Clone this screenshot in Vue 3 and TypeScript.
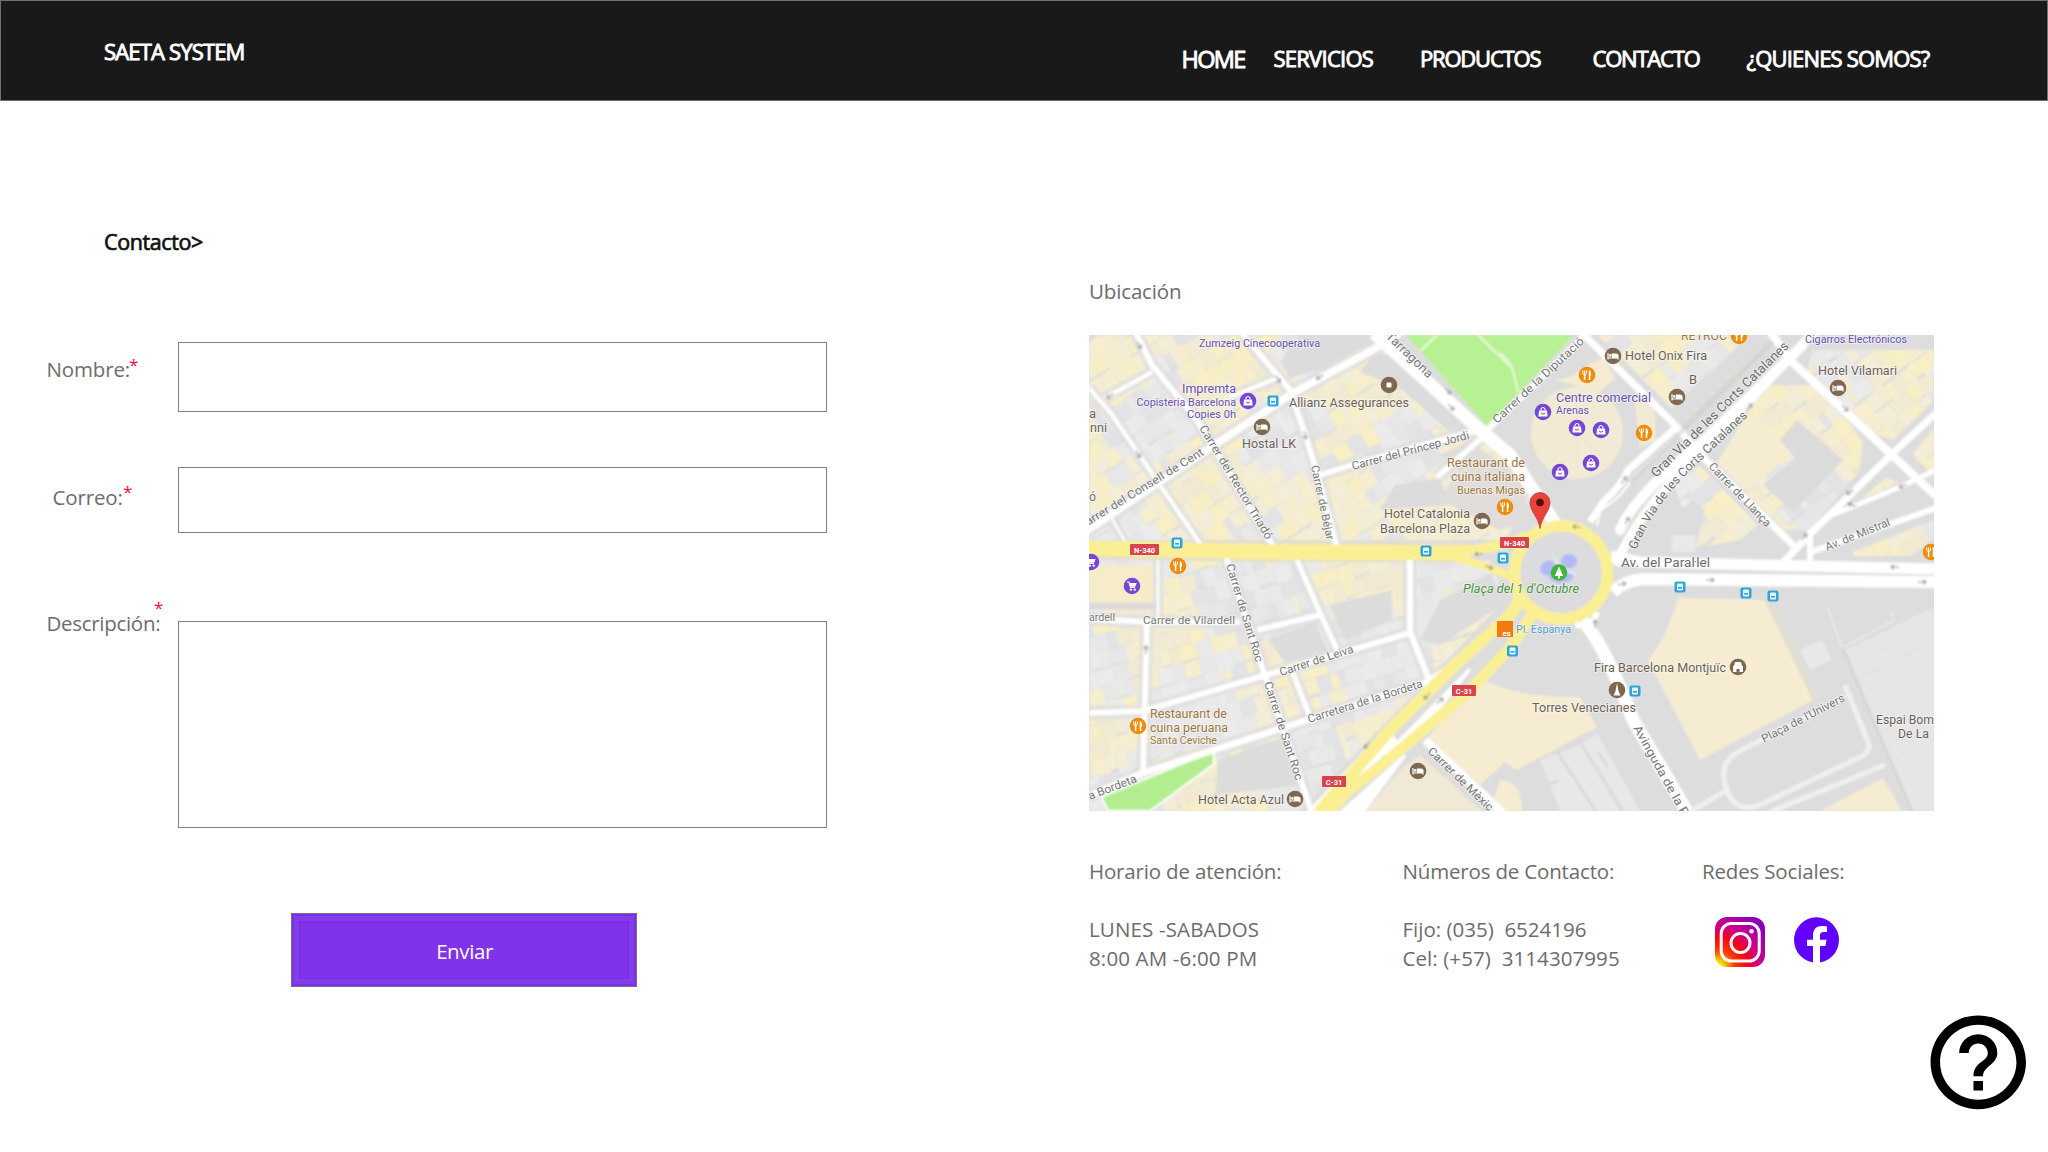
<script setup lang="ts">
interface NavItem { text: string; cls: string }
interface Field { id: string; label: string; area: boolean }
interface Label { t: string; x: number; y: number; len: number; s: number; c: string; r?: number; i?: boolean }
interface Poi { x: number; y: number }
interface Lot { x: number; y: number; w: number; h: number; fill: string }

const nav: NavItem[] = [
  { text: 'HOME', cls: 'home' },
  { text: 'SERVICIOS', cls: 'servicios' },
  { text: 'PRODUCTOS', cls: 'productos' },
  { text: 'CONTACTO', cls: 'contacto' },
  { text: '¿QUIENES SOMOS?', cls: 'quienes' },
]

const fields: Field[] = [
  { id: 'nombre', label: 'Nombre:', area: false },
  { id: 'correo', label: 'Correo:', area: false },
  { id: 'descripcion', label: 'Descripción:', area: true },
]

const BROWN = '#6d5f56'
const STREET = '#777777'
const PURPLE = '#6550b0'
const FOOD = '#a0753c'

const labels: Label[] = [
  { t: 'Zumzeig Cinecooperativa', x: 1199, y: 347, len: 121, s: 10.5, c: PURPLE },
  { t: 'Impremta', x: 1182, y: 392.5, len: 54, s: 12, c: PURPLE },
  { t: 'Copisteria Barcelona', x: 1136.5, y: 405.5, len: 99.5, s: 10.5, c: PURPLE },
  { t: 'Copies 0h', x: 1187, y: 418, len: 49, s: 10.5, c: PURPLE },
  { t: 'Allianz Assegurances', x: 1289, y: 407, len: 120, s: 12, c: BROWN },
  { t: 'Hostal LK', x: 1242, y: 448, len: 54, s: 12, c: BROWN },
  { t: 'a', x: 1089, y: 418, len: 7, s: 12, c: BROWN },
  { t: 'nni', x: 1090, y: 432, len: 17, s: 12, c: BROWN },
  { t: 'ó', x: 1089, y: 501, len: 7, s: 12, c: STREET },
  { t: 'Carrer del Rector Triadó', x: 1199, y: 428, len: 131, s: 11.5, c: STREET, r: 59 },
  { t: 'Carrer del Consell de Cent', x: 1081, y: 530, len: 145, s: 11.5, c: STREET, r: -31.5 },
  { t: 'Carrer de Béjar', x: 1311, y: 466, len: 76, s: 11, c: STREET, r: 78 },
  { t: 'Carrer del Príncep Jordi', x: 1353, y: 470, len: 121, s: 11.5, c: STREET, r: -15 },
  { t: 'Tarragona', x: 1385, y: 337, len: 60, s: 12.5, c: STREET, r: 44 },
  { t: 'Carrer de la Diputació', x: 1497, y: 424, len: 120, s: 11.5, c: STREET, r: -43 },
  { t: 'Hotel Onix Fira', x: 1625, y: 360, len: 82, s: 12, c: BROWN },
  { t: 'B', x: 1689, y: 384, len: 8, s: 12, c: BROWN },
  { t: 'RETROC', x: 1681, y: 340, len: 46, s: 12, c: FOOD },
  { t: 'Cigarros Electrónicos', x: 1805, y: 343, len: 102, s: 10.5, c: PURPLE },
  { t: 'Hotel Vilamari', x: 1818, y: 375, len: 79, s: 12, c: BROWN },
  { t: 'Centre comercial', x: 1556, y: 401.5, len: 95, s: 12.5, c: PURPLE },
  { t: 'Arenas', x: 1556, y: 414, len: 33, s: 10.5, c: PURPLE },
  { t: 'Gran Via de les Corts Catalanes', x: 1656, y: 478, len: 187, s: 13, c: '#6a6a6a', r: -44.5 },
  { t: 'Carrer de Llança', x: 1708, y: 467, len: 84, s: 11.5, c: STREET, r: 46 },
  { t: 'Av. del Paraŀlel', x: 1621, y: 567, len: 89, s: 12.5, c: '#6a6a6a' },
  { t: 'Av. de Mistral', x: 1827, y: 551, len: 69, s: 11.5, c: STREET, r: -22 },
  { t: 'Restaurant de', x: 1447, y: 466.5, len: 78, s: 12, c: FOOD },
  { t: 'cuina italiana', x: 1451, y: 481, len: 74, s: 12, c: FOOD },
  { t: 'Buenas Migas', x: 1457, y: 494, len: 68, s: 10.5, c: FOOD },
  { t: 'Hotel Catalonia', x: 1384, y: 518, len: 86, s: 12, c: BROWN },
  { t: 'Barcelona Plaza', x: 1380, y: 533, len: 90, s: 12, c: BROWN },
  { t: "Plaça del 1 d'Octubre", x: 1463, y: 593, len: 116, s: 12, c: '#459440', i: true },
  { t: 'Pl. Espanya', x: 1516, y: 633, len: 55, s: 11, c: '#559bd3' },
  { t: 'Fira Barcelona Montjuïc', x: 1594, y: 672, len: 132, s: 12, c: BROWN },
  { t: 'Torres Venecianes', x: 1532, y: 712, len: 104, s: 12, c: BROWN },
  { t: 'Avinguda de la P', x: 1633, y: 728, len: 102, s: 12, c: STREET, r: 61 },
  { t: "Plaça de l'Univers", x: 1764, y: 743, len: 92, s: 11.5, c: STREET, r: -27.5 },
  { t: 'Espai Bom', x: 1876, y: 724, len: 58, s: 12, c: BROWN },
  { t: 'De La', x: 1898, y: 738, len: 31, s: 12, c: BROWN },
  { t: 'ardell', x: 1089, y: 621, len: 26, s: 11.5, c: STREET },
  { t: 'Carrer de Vilardell', x: 1143, y: 624, len: 92, s: 11.5, c: STREET },
  { t: 'Carrer de Sant Roc', x: 1226, y: 565, len: 102, s: 11.5, c: STREET, r: 73 },
  { t: 'Carrer de Sant Roc', x: 1264, y: 683, len: 103, s: 11.5, c: STREET, r: 72 },
  { t: 'Carrer de Leiva', x: 1281, y: 676, len: 77, s: 11.5, c: STREET, r: -18 },
  { t: 'Carretera de la Bordeta', x: 1309, y: 723, len: 120, s: 11.5, c: STREET, r: -17.5 },
  { t: 'a Bordeta', x: 1090, y: 800, len: 51, s: 11.5, c: STREET, r: -21 },
  { t: 'Restaurant de', x: 1150, y: 717.5, len: 77, s: 12, c: FOOD },
  { t: 'cuina peruana', x: 1150, y: 731.5, len: 78, s: 12, c: FOOD },
  { t: 'Santa Ceviche', x: 1150, y: 744, len: 67, s: 10.5, c: FOOD },
  { t: 'Hotel Acta Azul', x: 1198, y: 803.5, len: 86, s: 12, c: BROWN },
  { t: 'Carrer de Mèxic', x: 1427, y: 752, len: 86, s: 11.5, c: STREET, r: 44 },
]

const p = (x: number, y: number): Poi => ({ x, y })
const beds = [p(1262, 427), p(1613, 356), p(1677, 397), p(1838, 388), p(1482, 521), p(1418, 771), p(1295, 799)]
const bags = [p(1248, 401), p(1543, 412), p(1577, 428), p(1601, 430), p(1591, 463), p(1560, 472)]
const carts = [p(1091, 562), p(1132, 586)]
const foods = [p(1587, 375), p(1644, 433), p(1739, 336), p(1505, 507), p(1178, 566), p(1138, 726), p(1931, 552)]
const buses = [p(1273, 401), p(1177, 543), p(1426, 551), p(1503, 558), p(1680, 587), p(1746, 593), p(1773, 596), p(1512.5, 651), p(1635, 691)]
const shields = [
  { x: 1130, y: 544, w: 29, t: 'N-340' },
  { x: 1500, y: 537, w: 29, t: 'N-340' },
  { x: 1452, y: 685, w: 24, t: 'C-31' },
  { x: 1322, y: 776, w: 24, t: 'C-31' },
]
const arrows = [
  { x: 1139, y: 345, r: 55 }, { x: 1110, y: 396, r: 145 }, { x: 1138, y: 454, r: 55 }, { x: 1278, y: 379, r: 50 },
  { x: 1320, y: 377, r: 150 }, { x: 1305, y: 435, r: 75 }, { x: 1448, y: 391, r: 45 }, { x: 1451, y: 407, r: 45 },
  { x: 1479, y: 554, r: 180 }, { x: 1489, y: 567, r: 20 }, { x: 1577, y: 527, r: 190 }, { x: 1627, y: 521, r: -60 },
  { x: 1624, y: 480, r: -50 }, { x: 1749, y: 407, r: -42 }, { x: 1845, y: 408, r: 45 }, { x: 1850, y: 492, r: 145 },
  { x: 1852, y: 505, r: 200 }, { x: 1903, y: 486, r: 158 }, { x: 1804, y: 537, r: -45 }, { x: 1895, y: 567, r: 180 },
  { x: 1710, y: 580, r: 0 }, { x: 1622, y: 584, r: -10 }, { x: 1922, y: 582, r: 0 }, { x: 1595, y: 624, r: -90 },
  { x: 1427, y: 696, r: 135 }, { x: 1440, y: 701, r: -42 }, { x: 1367, y: 745, r: 135 }, { x: 1146, y: 650, r: -90 },
]

// Side streets west of the square: each is drawn once as a grey kerb and once as a white carriageway.
const sideStreets: { d: string; w: number }[] = [
  { d: 'M1136 333L1152 365L1197 420L1273 546', w: 5.5 },
  { d: 'M1226 557L1263 670L1312 813', w: 5.5 },
  { d: 'M1242 333L1290 390L1307 440L1317 473L1337 548', w: 5.5 },
  { d: 'M1085 532L1207 450L1293 393L1387 342L1400 333', w: 7.5 },
  { d: 'M1152 372L1105 398M1230 397L1280 377', w: 4 },
  { d: 'M1320 475L1355 464L1478 430M1484 436L1437 477', w: 5.5 },
  { d: 'M1410 560V632L1430 682', w: 6 },
  { d: 'M1257 630L1320 615M1089 619L1147 622H1240M1147 622L1143 773M1089 713L1147 711', w: 5.5 },
  { d: 'M1147 710L1280 671L1413 632', w: 5.5 },
  { d: 'M1089 796L1143 773L1307 720L1427 682L1462 660', w: 6.5 },
  { d: 'M1297 560L1320 613L1338 652M1293 673L1310 717', w: 5 },
  { d: 'M1089 388L1110 412L1201 545', w: 4 },
  { d: 'M1107 510L1127 545M1158 560V620', w: 2.5 },
]

// Deterministic scatter of building lots, so that the map is drawn the same way every time.
function lots(seed: number, x0: number, y0: number, x1: number, y1: number, bias: number): Lot[] {
  let s = seed
  const rnd = (): number => {
    s = (s * 16807) % 2147483647
    return s / 2147483647
  }
  const warmFills = ['#f6eecf', '#f4edd7', '#f8efc6', '#f2ead2']
  const coolFills = ['#e7e7e9', '#e9e9e8', '#e3e3e6', '#ebebec']
  const out: Lot[] = []
  for (let y = y0; y < y1; y += 17) {
    for (let x = x0; x < x1;) {
      const w = 6 + rnd() * 13
      const wave = Math.sin(x / 31 + 1.3) * Math.cos(y / 27) + (rnd() - 0.5) * 0.9
      const set = wave < bias ? warmFills : coolFills
      out.push({ x, y: y + rnd() * 2, w: w - 0.3, h: 15 + rnd() * 4, fill: set[Math.floor(rnd() * 4)] })
      x += w
    }
  }
  return out
}
const north = lots(41, 880, 250, 1600, 780, 0.12)
const south = lots(97, 1000, 450, 1600, 950, -0.1)
const east = lots(23, 1400, 200, 2100, 620, 0.5)
const halls = Array.from({ length: 9 }, (_, i) => 664 + i * 14)
</script>

<template>
  <div class="page">
    <header class="topbar">
      <div class="brand">SAETA SYSTEM</div>
      <nav class="nav">
        <a v-for="n in nav" :key="n.text" :class="n.cls">{{ n.text }}</a>
      </nav>
    </header>

    <main class="content">
      <section class="left">
        <h1 class="crumb">Contacto&gt;</h1>
        <form class="form" @submit.prevent>
          <div v-for="f in fields" :key="f.id" class="row" :class="f.id">
            <label :for="f.id"><span>{{ f.label }}</span><b class="star">*</b></label>
            <textarea v-if="f.area" :id="f.id" class="box"></textarea>
            <input v-else :id="f.id" class="box" type="text" />
          </div>
          <button class="send" type="submit"><span>Enviar</span></button>
        </form>
      </section>

      <section class="right">
        <h2 class="place">Ubicación</h2>
        <svg class="map" viewBox="1089 335 845 476" width="845" height="476">
          <defs>
            <clipPath id="cn"><path d="M1089 335H1370L1500 452L1530 500L1505 540H1089Z" /></clipPath>
            <clipPath id="cs"><path d="M1089 560H1490L1505 600L1300 811H1089Z" /></clipPath>
            <clipPath id="ce"><path d="M1597 335H1750L1672 408ZM1812 350H1934V400L1893 440L1862 430L1806 376ZM1668 482L1700 466L1758 525L1740 540L1695 548L1705 510ZM1672 480L1692 476L1702 496L1682 508ZM1765 385H1825L1863 443L1860 470L1810 530H1783L1717 463ZM1912 455L1934 428V475ZM1860 500L1885 478L1900 482ZM1853 552L1934 520V556H1853Z" /></clipPath>
            <filter id="soft" x="0" y="0" width="100%" height="100%"><feGaussianBlur stdDeviation="0.8" /></filter>
            <path id="gv" d="M1636 550Q1654 506 1690 471L1746 418" />
          </defs>
          <g filter="url(#soft)">
            <rect x="1080" y="325" width="870" height="500" fill="#dddddd" />
            <g clip-path="url(#cn)"><g transform="rotate(-32 1290 440)">
              <rect v-for="(l, i) in north" :key="i" :x="l.x" :y="l.y" :width="l.w" :height="l.h" :fill="l.fill" />
            </g></g>
            <g clip-path="url(#cs)"><g transform="rotate(-16 1280 690)">
              <rect v-for="(l, i) in south" :key="i" :x="l.x" :y="l.y" :width="l.w" :height="l.h" :fill="l.fill" />
            </g></g>
            <g clip-path="url(#ce)"><g transform="rotate(-38 1760 440)">
              <rect v-for="(l, i) in east" :key="i" :x="l.x" :y="l.y" :width="l.w" :height="l.h" :fill="l.fill" />
            </g></g>
            <g fill="#dcdcdd">
              <path d="M1300 335H1385L1330 366L1290 378L1280 362Z" />
              <path d="M1376 352L1400 358L1484 430L1450 432L1400 388L1360 372Z" />
              <path d="M1395 485L1440 478L1450 505L1380 510Z" />
              <path d="M1440 500L1458 470L1440 455L1470 440L1520 480L1530 520L1500 530Z" fill="#e0dddb" />
              <path d="M1268 640L1315 622L1330 655L1285 662Z" />
              <path d="M1330 605L1392 590V620L1345 640Z" />
              <path d="M1218 760L1290 735L1300 785L1215 795Z" />
              <path d="M1440 645L1510 600L1490 575L1440 600L1420 640Z" />
              <path d="M1085 540L1280 540L1470 543V563L1280 562L1085 559Z" fill="#e4dfc9" />
            </g>
            <path d="M1089 565H1155V604L1089 602Z" fill="#f6ecc8" />
            <path d="M1089 606H1157" stroke="#dddada" stroke-width="7" />
            <g fill="#f5ecd2">
              <path d="M1678 598L1765 600L1813 700L1700 760L1648 660Q1668 635 1678 598Z" />
              <path d="M1478 676Q1510 698 1580 697L1597 727L1517 770L1505 762L1480 785L1428 738Z" />
              <path d="M1400 770L1420 755L1482 811H1365Z" fill="#f0e9d6" />
              <path d="M1500 780Q1522 780 1522 811H1490Z" />
              <path d="M1883 778L1902 811H1820Z" />
              <circle cx="1577" cy="433" r="46" fill="#f2ead4" />
              <path d="M1556 380Q1575 378 1590 364L1602 358L1616 378L1600 392Z" fill="#f4ebd0" />
              <path d="M1634 395L1655 410L1656 440L1640 448Z" fill="#f2ead4" />
              <path d="M1717 463L1757 417L1797 452L1745 490Z" />
            </g>
            <path d="M1544 433H1610M1577 395V470M1554 408L1602 458M1554 458L1602 408" stroke="#ebe3cf" stroke-width="1" />
            <path d="M1765 600L1813 700M1770 600L1817 697" stroke="#e9e3c4" stroke-width="1.500" />
            <path d="M1797 420L1843 460L1793 512L1763 485L1795 458L1780 440Z" fill="#dbdbdb" />
            <path d="M1800 650L1822 640L1832 660L1810 670Z" fill="#e8e8e8" />
            <path d="M1672 535H1695V552H1672Z" fill="#e9e9e9" />
            <path d="M1846 650L1934 607V811H1912Z" fill="#e6e6e6" />
            <g stroke="#dedede" stroke-width="1"><path v-for="y in halls" :key="y" :d="`M${1853 + (y - 664) * 0.43} ${y}L1920 ${y - 30}`" /></g>
            <path d="M1828 608L1842 648L1895 620L1890 610" fill="none" stroke="#e8e8e8" stroke-width="2" />
            <path d="M1540 760L1580 745L1620 811H1560Z M1582 742L1598 734L1640 811H1625Z" fill="#e8e8e8" />
            <path d="M1556 750L1596 811M1598 752L1608 768M1548 785L1558 781" stroke="#d9d9d9" stroke-width="2.500" />
            <path d="M1406 335L1487 426L1574 335Z" fill="#b6f193" />
            <path d="M1437 335L1420 351M1478 335L1510 366M1500 353Q1512 362 1514 375L1518 392" fill="none" stroke="#e9fbdc" stroke-width="2" />

            <g fill="none" stroke="#dededf" stroke-linejoin="round">
              <path v-for="(s, i) in sideStreets" :key="'k' + i" :d="s.d" :stroke-width="s.w + 8" stroke-opacity="0.8" />
            </g>
            <path d="M1101 797L1108 811H1150L1214 764V753H1208Z" fill="#b2ee90" stroke="#fff" stroke-width="2" />
            <g fill="none" stroke="#fff" stroke-linejoin="round">
              <path v-for="(s, i) in sideStreets" :key="'w' + i" :d="s.d" :stroke-width="s.w" />
              <path d="M1374 333L1480 430L1510 455L1556 525" stroke-width="13" />
              <path d="M1487 430L1590 331" stroke-width="6" />
              <path d="M1580 331L1673 423L1703 457L1796 548" stroke-width="7" />
              <path d="M1770 331L1790 360L1936 496" stroke-width="8" />
              <path d="M1936 413L1893 453L1807 537L1780 566" stroke-width="7" />
              <path d="M1825 518L1900 487L1936 470" stroke-width="5" />
              <path d="M1811 552L1936 508M1810 530V562" stroke-width="6" />
              <path d="M1802 346L1700 444Q1635 495 1620 530" stroke-width="10" stroke-linecap="round" />
              <path d="M1815 331L1712 440Q1645 500 1615 565" stroke-width="9" />
              <path d="M1677 427L1628 470Q1622 485 1605 500L1590 522" stroke-width="7" />
              <path d="M1676 436L1632 478Q1622 498 1600 510L1597 526" stroke-width="2" />
              <path d="M1425 740L1503 813" stroke-width="8" />
              <path d="M1583 620Q1607 650 1633 720L1688 813" stroke-width="13" />
              <path d="M1575 625H1592L1597 612" stroke-width="6" />
              <path d="M1611 556L1640 562L1936 569" stroke-width="11" />
              <path d="M1613 592Q1625 580 1645 579L1936 582" stroke-width="12" />
              <path d="M1772 342L1630 482" stroke="#c8cdc8" stroke-width="5" stroke-dasharray="1.500 1.500" />
              <path d="M1845 685L1868 742Q1872 750 1862 756L1758 806Q1738 812 1729 795Q1715 765 1738 752L1845 697M1727 790L1690 812M1885 765L1770 812" stroke="#f0f0f0" stroke-width="5" />
              <path d="M1842 648L1912 811" stroke="#d6d6d6" stroke-width="3" />
            </g>
            <path d="M1470 669L1385 755L1430 720ZM1387 728L1308 813H1330L1395 740ZM1405 755L1340 813H1362Z" fill="#fff" stroke="#fff" stroke-width="3" />

            <!-- main arteries and the roundabout -->
            <circle cx="1561" cy="572.5" r="46" fill="#dcdbdd" />
            <g fill="none" stroke="#faf093" stroke-linejoin="round">
              <path d="M1085 548L1280 552L1470 553" stroke-width="15" />
              <path d="M1445 551L1475 550Q1505 545 1528 536" stroke-width="10" />
              <path d="M1450 556L1485 566L1515 578" stroke-width="8" />
              <circle cx="1561" cy="572.5" r="46.5" stroke-width="11.5" />
              <path d="M1517 590Q1525 600 1505 620L1457 663L1390 730L1318 813" stroke-width="12" />
              <path d="M1532 615L1510 648L1465 695L1389 759L1347 792L1327 815" stroke-width="11" />
            </g>
            <g fill="#b1b9f8"><ellipse cx="1548" cy="568" rx="8" ry="7" transform="rotate(-25 1548 568)" /><ellipse cx="1569" cy="561" rx="8" ry="7" /><ellipse cx="1561" cy="576" rx="12" ry="7" /></g>
            <path d="M1553 555L1560 570L1577 574" fill="none" stroke="#e6e6ee" stroke-width="2.500" />
            <g fill="none" stroke="#8f9090" stroke-width="1.1">
              <path v-for="(a, i) in arrows" :key="i" :transform="`translate(${a.x} ${a.y}) rotate(${a.r})`" d="M-4 0H4M1 -2.3L4 0L1 2.3" />
            </g>
          </g>

          <g class="names">
            <text v-for="(l, i) in labels" :key="i" :textLength="l.len" lengthAdjust="spacingAndGlyphs" :font-size="l.s" :fill="l.c" :font-style="l.i ? 'italic' : 'normal'" :transform="`translate(${l.x} ${l.y}) rotate(${l.r || 0})`">{{ l.t }}</text>
            <text font-size="12.5" fill="#707070"><textPath href="#gv" textLength="176" lengthAdjust="spacingAndGlyphs">Gran Via de les Corts Catalanes</textPath></text>
          </g>

          <g v-for="(s, i) in shields" :key="'s' + i">
            <rect :x="s.x" :y="s.y" :width="s.w" height="11" rx="1" fill="#d9434d" />
            <text class="shield" :x="s.x + s.w / 2" :y="s.y + 8.6">{{ s.t }}</text>
          </g>
          <g v-for="(b, i) in buses" :key="'u' + i" :transform="`translate(${b.x} ${b.y})`">
            <rect x="-5.5" y="-5.5" width="11" height="11" rx="2" fill="#2fa3dc" />
            <rect x="-3" y="-3.5" width="6" height="7" rx="1" fill="#e8f6fd" />
            <path d="M-2 0.8H2" stroke="#2fa3dc" stroke-width="1.6" />
          </g>
          <g v-for="(b, i) in beds" :key="'b' + i" :transform="`translate(${b.x} ${b.y})`">
            <circle r="8.3" fill="#80674f" />
            <path d="M-5 -3V3.5M-5 2H5V3.5M5 2V-0.5Q5 -2 3 -2H-0.5V2Z" fill="none" stroke="#fff" stroke-width="1.2" />
            <path d="M-0.5 2V-2H3Q5 -2 5 0V2Z" fill="#fff" />
            <circle cx="-2.7" cy="-0.6" r="1.3" fill="#fff" />
          </g>
          <g v-for="(b, i) in bags" :key="'g' + i" :transform="`translate(${b.x} ${b.y})`">
            <circle r="8.3" fill="#7646d4" />
            <path d="M-4 -1.5H4L4.6 4.4H-4.6Z" fill="#fff" />
            <path d="M-2 -1.5V-3Q0 -6 2 -3V-1.5" fill="none" stroke="#fff" stroke-width="1.2" />
            <path d="M-2 1Q0 3.4 2 1" fill="none" stroke="#7646d4" />
          </g>
          <g v-for="(b, i) in carts" :key="'c' + i" :transform="`translate(${b.x} ${b.y})`">
            <circle r="8.3" fill="#7646d4" />
            <path d="M-5 -4H-3L-1.5 1.5H3" fill="none" stroke="#fff" stroke-width="1.2" />
            <path d="M-2.8 -3H4.6L3.2 0.7H-1.8Z" fill="#fff" /><circle cx="-1" cy="3.6" r="1.2" fill="#fff" /><circle cx="2.8" cy="3.6" r="1.2" fill="#fff" />
          </g>
          <g v-for="(b, i) in foods" :key="'f' + i" :transform="`translate(${b.x} ${b.y})`">
            <circle r="8.3" fill="#ee8d0c" />
            <path d="M-2.4 -0.5V5M2.5 -4.5V5" stroke="#fff" stroke-width="1.5" />
            <path d="M-4.2 -4.6V-1.3Q-2.4 0.8 -0.6 -1.3V-4.6M-2.4 -4.6V0" fill="none" stroke="#fff" />
            <path d="M2 -4.6Q4.6 -3 4 0.8H2Z" fill="#fff" />
          </g>
          <circle cx="1389" cy="385" r="8.3" fill="#80674f" /><rect x="1386.5" y="382.5" width="5" height="5" rx="1" fill="#fff" />
          <circle cx="1738" cy="667" r="8.3" fill="#80674f" /><path d="M1733 672V666H1734L1735 662H1741L1742 666H1743V672H1739.500V669H1736.500V672Z" fill="#fff" />
          <circle cx="1617" cy="690" r="8.3" fill="#80674f" /><path d="M1617 683L1618.500 691L1620.500 695.500H1613.500L1615.500 691Z" fill="#fff" />
          <circle cx="1559" cy="572.5" r="8.3" fill="#3fb63a" /><path d="M1559 566.500L1562.500 574.500L1563.500 576H1560V578.500H1558V576H1554.500L1555.500 574.500Z" fill="#fff" />
          <rect x="1497" y="621" width="16" height="16" fill="#f47a0c" /><text x="1502.500" y="635.500" class="rail">es</text>
          <path d="M1540 528.500C1538.500 517 1530 511.500 1530 502.500A10 10 0 0 1 1550 502.500C1550 511.500 1541.500 517 1540 528.500Z" fill="#e8433a" stroke="#c5372f" stroke-width="0.8" />
          <circle cx="1540" cy="502.500" r="3.800" fill="#54100d" />
        </svg>

        <div class="info">
          <div class="hours">
            <h3>Horario de atención:</h3>
            <p class="days">LUNES -SABADOS</p>
            <p class="time">8:00 AM -6:00 PM</p>
          </div>
          <div class="phones">
            <h3>Números de Contacto:</h3>
            <p class="fijo">Fijo: (035)&nbsp; 6524196</p>
            <p class="cel">Cel: (+57)&nbsp; 3114307995</p>
          </div>
          <div class="social">
            <h3>Redes Sociales:</h3>
            <div class="icons">
              <svg width="50" height="50" viewBox="0 0 50 50">
                <defs>
                  <radialGradient id="ig" cx="0.05" cy="1" r="1.2">
                    <stop offset="0" stop-color="#fff000" /><stop offset="0.1" stop-color="#ffd800" /><stop offset="0.28" stop-color="#ff3a00" />
                    <stop offset="0.5" stop-color="#f80018" /><stop offset="0.7" stop-color="#cc0090" /><stop offset="1" stop-color="#8a00b8" />
                  </radialGradient>
                </defs>
                <rect width="50" height="50" rx="12" fill="url(#ig)" />
                <rect x="6.200" y="6.500" width="38" height="37.500" rx="10" fill="none" stroke="#fff" stroke-width="3" />
                <circle cx="25.500" cy="26" r="9.500" fill="none" stroke="#fff" stroke-width="3" />
                <circle cx="36.500" cy="14.300" r="2.300" fill="#fff" />
              </svg>
              <svg class="fb" width="45" height="46" viewBox="0 0 45 46">
                <ellipse cx="22.500" cy="23" rx="22.500" ry="22.800" fill="#6200ff" />
                <path d="M19 46V29H13V22.800H19V18.500C19 12 22.500 9 28 9C30 9 32 9.300 33 9.500V15H29.500C27 15 26 16.500 26 18.500V22.800H32.500L31.500 29H26V46Z" fill="#fff" />
              </svg>
            </div>
          </div>
        </div>
      </section>
    </main>

    <svg class="help" viewBox="0 0 24 24" preserveAspectRatio="none">
      <path d="M11 18h2v-2h-2v2zm1-16C6.480 2 2 6.480 2 12s4.480 10 10 10 10-4.480 10-10S17.520 2 12 2zm0 18c-4.410 0-8-3.590-8-8s3.590-8 8-8 8 3.590 8 8-3.590 8-8 8zm0-14c-2.210 0-4 1.790-4 4h2c0-1.100.9-2 2-2s2 .9 2 2c0 2-3 1.750-3 5h2c0-2.250 3-2.500 3-5 0-2.210-1.790-4-4-4z" />
    </svg>
  </div>
</template>

<style>
body { background: #fff; }
</style>

<style scoped>
.page { position: relative; width: 2048px; height: 1152px; overflow: hidden; background: #fff; color: #6c6c6c; font-family: "Open Sans", "Noto Sans", sans-serif; font-size: 20.5px; line-height: 30px; }
h1, h2, h3, p { margin: 0; font-size: inherit; font-weight: 400; white-space: nowrap; }

.topbar { box-sizing: border-box; height: 101px; display: flex; justify-content: space-between; background: #191919; border: 1px solid #707070; color: #fff; font-size: 22px; white-space: nowrap; -webkit-text-stroke: 0.9px currentColor; }
.brand { padding: 34.500px 0 0 103px; letter-spacing: -0.83px; }
.nav { display: grid; grid-template-columns: 92px 146.500px 172.500px 154px 300.500px; padding-top: 42px; }
.home { font-size: 23.500px; letter-spacing: -1.700px; margin-top: 1px; }
.servicios { letter-spacing: -0.75px; }
.productos { letter-spacing: -1.200px; }
.contacto { letter-spacing: -1.200px; }
.quienes { letter-spacing: -0.82px; }

.content { display: flex; }
.left { width: 1089px; }
.crumb { margin: 126px 0 0 104px; color: #111; font-size: 21.500px; letter-spacing: -0.4px; -webkit-text-stroke: 0.7px currentColor; }
.form { display: flex; flex-direction: column; margin-top: 85px; }
.row { display: flex; }
.row label { position: relative; box-sizing: border-box; width: 178px; padding-left: 46.500px; white-space: nowrap; letter-spacing: -0.15px; }
.star { position: absolute; color: #ff0a3c; font-weight: 400; font-size: 17px; line-height: 20px; }
.box { box-sizing: border-box; width: 649px; margin: 0; padding: 0 12px; border: 1px solid #808080; border-radius: 0; background: #fff; resize: none; outline: none; font: inherit; }
.nombre .box { height: 70px; }
.nombre label { padding-top: 12px; }
.nombre .star { left: 129px; top: 13px; }
.correo { margin-top: 55px; }
.correo .box { height: 66px; }
.correo label { padding: 15px 0 0 52.500px; }
.correo .star { left: 123px; top: 15px; }
.descripcion { margin-top: 88px; }
.descripcion .box { height: 207px; }
.descripcion label { margin-top: -13px; letter-spacing: -0.3px; }
.descripcion .star { left: 154px; top: -10px; }
.send { box-sizing: border-box; width: 346px; height: 74px; margin: 85px 0 0 291px; padding: 2px 0 0 1px; border: 1px solid #707089; background: #8133ea; box-shadow: inset 0 0 0 2px #8428ee, inset 0 0 0 7px #7d40e4, inset 0 0 0 9px #842aee; color: #fff; font: inherit; letter-spacing: -0.4px; }

.right { width: 959px; }
.place { margin-top: 174.500px; line-height: 30px; letter-spacing: -0.15px; }
.map { display: block; margin-top: 29.500px; }
.names text { font-family: Roboto, sans-serif; paint-order: stroke; stroke: #fff; stroke-opacity: 0.55; stroke-width: 1.600px; }
.shield { font: 700 7.500px Roboto, sans-serif; fill: #fff; text-anchor: middle; }
.rail { font: 700 8px Roboto, sans-serif; fill: #fff; }
.info { display: grid; grid-template-columns: 313.500px 299.500px auto; margin-top: 45px; }
.info h3 { letter-spacing: -0.17px; }
.days, .time { letter-spacing: 0.15px; }
.fijo { letter-spacing: 0; }
.cel { letter-spacing: 0.08px; }
.days, .fijo { margin-top: 27.500px; }
.time, .cel { margin-top: -1px; }
.icons { display: flex; margin: 31px 0 0 13px; }
.fb { margin-left: 28.500px; }

.help { position: absolute; left: 1921px; top: 1005.500px; width: 114.500px; height: 112.500px; }
</style>
